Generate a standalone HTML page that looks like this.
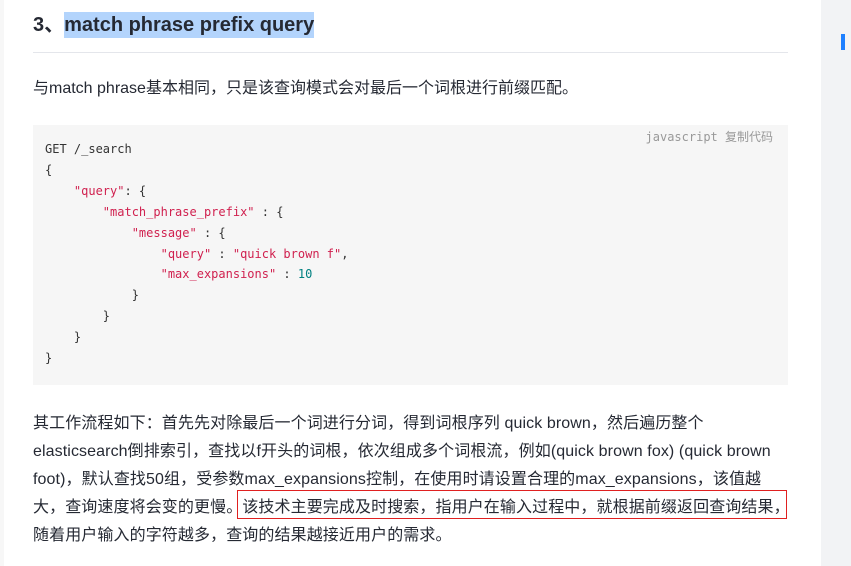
<!DOCTYPE html>
<html><head><meta charset="utf-8"><style>
body{margin:0;width:851px;height:566px;background:#fff;position:relative;overflow:hidden;font-family:"Liberation Sans","Noto Sans CJK SC",sans-serif;color:#333}
.side{position:absolute;left:821px;top:0;width:30px;height:566px;background:#f2f3f5}
.blue{position:absolute;left:841px;top:34px;width:4px;height:16px;background:#1e80ff}
.lefts{position:absolute;left:0;top:0;width:4px;height:566px;background:#f7f7f7}
h3{position:absolute;left:33px;top:8px;margin:0;font-size:20px;font-weight:bold;line-height:34px;color:#252933}
h3 span{background:#b3d4fc;padding:2px 0}
.hr{position:absolute;left:33px;top:52px;width:755px;height:1px;background:#e4e6eb}
p{margin:0;position:absolute;left:33px;font-size:16px;color:#252933;white-space:nowrap}
.p1{top:77px;line-height:24px}
.p2{top:410px;line-height:28px;letter-spacing:0.1px}
pre{position:absolute;left:33px;top:125px;width:755px;height:260px;margin:0;background:#f6f6f6;font-family:"DejaVu Sans Mono","Liberation Mono",monospace;font-size:12px;line-height:20.9px;padding:14px 0 0 12px;box-sizing:border-box;color:#333}
.s{color:#d0214f}.n{color:#008080}
.lang{position:absolute;right:15px;top:4px;font-size:12px;color:#999;line-height:16px}
.box{position:absolute;left:237px;top:490px;width:550px;height:29px;border:1px solid #e02020;box-sizing:border-box}
</style></head><body>
<div class="lefts"></div>
<div class="side"></div><div class="blue"></div>
<h3>3、<span>match phrase prefix query</span></h3>
<div class="hr"></div>
<p class="p1">与match phrase基本相同，只是该查询模式会对最后一个词根进行前缀匹配。</p>
<pre><span class="lang">javascript 复制代码</span>GET /_search
{
    <span class="s">"query"</span>: {
        <span class="s">"match_phrase_prefix"</span> : {
            <span class="s">"message"</span> : {
                <span class="s">"query"</span> : <span class="s">"quick brown f"</span>,
                <span class="s">"max_expansions"</span> : <span class="n">10</span>
            }
        }
    }
}</pre>
<p class="p2">其工作流程如下：首先先对除最后一个词进行分词，得到词根序列 quick brown，然后遍历整个<br>elasticsearch倒排索引，查找以f开头的词根，依次组成多个词根流，例如(quick brown fox) (quick brown<br>foot)，默认查找50组，受参数max_expansions控制，在使用时请设置合理的max_expansions，该值越<br>大，查询速度将会变的更慢。该技术主要完成及时搜索，指用户在输入过程中，就根据前缀返回查询结果，<br>随着用户输入的字符越多，查询的结果越接近用户的需求。</p>
<div class="box"></div>
</body></html>
